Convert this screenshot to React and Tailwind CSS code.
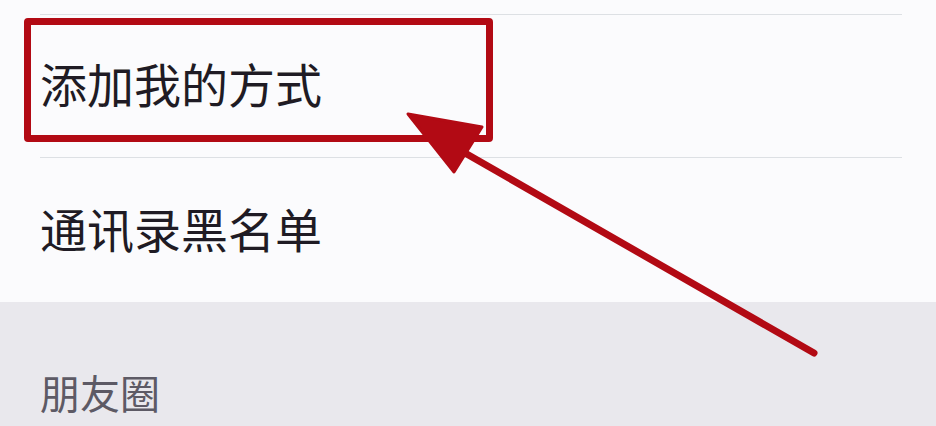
import React from "react";

const cjk = { fontFamily: '"Noto Sans CJK SC", "Noto Sans", sans-serif' };

const SettingRow = ({ label, className = "" }) => (
  <div className={`ml-[40px] mr-[34px] flex items-center border-t border-[#dde0e4] ${className}`}>
    <span className="text-[47px] leading-none text-[#1f1b24]" style={cjk}>
      {label}
    </span>
  </div>
);

const ArrowMark = () => (
  <svg
    className="pointer-events-none absolute left-0 top-0"
    width="936"
    height="426"
    viewBox="0 0 936 426"
  >
    <line x1="458" y1="149" x2="814" y2="353" stroke="#b20a14" strokeWidth="7" strokeLinecap="round" />
    <polygon points="408,114 482,127 454,172" fill="#b20a14" stroke="#b20a14" strokeWidth="3" strokeLinejoin="round" />
  </svg>
);

export default function App() {
  return (
    <div className="relative h-[426px] w-[936px] overflow-hidden bg-[#fbfbfd]">
      <div className="h-[14px]" />
      <SettingRow label="添加我的方式" className="h-[143px] pb-[8px]" />
      <SettingRow label="通讯录黑名单" className="h-[145px] pb-[6px]" />

      <div className="flex h-[124px] items-end bg-[#e9e8ed] pb-[14px] pl-[40px]">
        <span className="text-[40px] leading-none text-[#5d5a65]" style={cjk}>
          朋友圈
        </span>
      </div>

      {/* highlight frame around the first row */}
      <div className="pointer-events-none absolute left-[24px] top-[18px] h-[124px] w-[469px] rounded-[4px] border-[7px] border-[#b20a14]" />
      <ArrowMark />
    </div>
  );
}
